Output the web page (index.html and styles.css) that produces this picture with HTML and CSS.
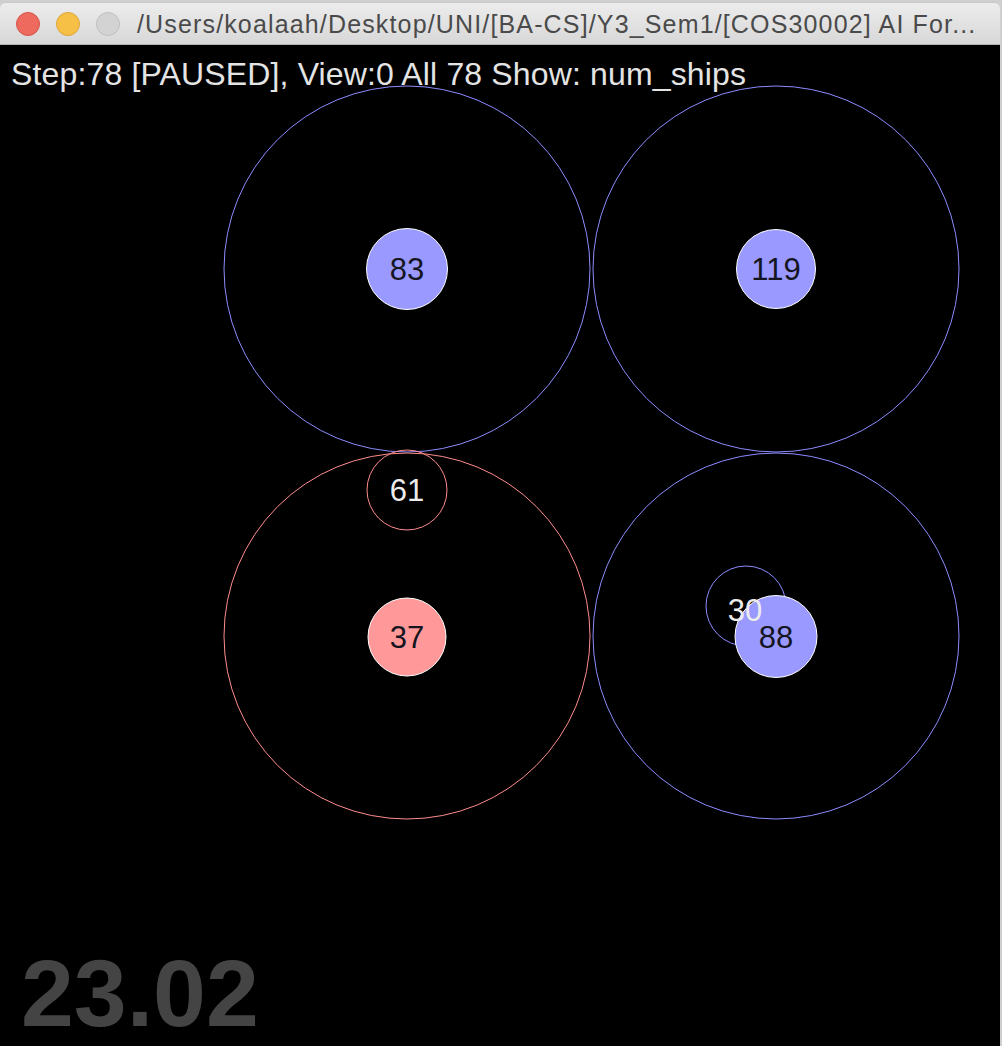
FILE: index.html
```html
<!DOCTYPE html>
<html>
<head>
<meta charset="utf-8">
<link rel="stylesheet" href="styles.css">
</head>
<body>
<div class="window">
  <div class="titlebar">
    <div class="lights">
      <span class="light red"></span>
      <span class="light yellow"></span>
      <span class="light grey"></span>
    </div>
    <div class="title">/Users/koalaah/Desktop/UNI/[BA-CS]/Y3_Sem1/[COS30002] AI For...</div>
  </div>
  <div class="canvas">
    <svg class="scene" width="1000" height="1000" viewBox="0 0 1000 1000" xmlns="http://www.w3.org/2000/svg">
      <rect x="0" y="0" width="1000" height="1000" fill="#000"/>
      <text class="status" x="11" y="40">Step:78 [PAUSED], View:0 All 78 Show: num_ships</text>
      <g fill="none" stroke-width="1">
        <circle cx="407" cy="224" r="183" stroke="#8c8cff"/>
        <circle cx="776" cy="224" r="183" stroke="#8c8cff"/>
        <circle cx="407" cy="591" r="183" stroke="#ff8c8c"/>
        <circle cx="776" cy="591" r="183" stroke="#8c8cff"/>
      </g>
      <circle cx="407" cy="224" r="40.5" fill="#9999ff" stroke="#fff" stroke-width="1"/>
      <text class="lbl dark" x="407" y="235">83</text>
      <circle cx="776" cy="224" r="39.5" fill="#9999ff" stroke="#fff" stroke-width="1"/>
      <text class="lbl dark" x="776" y="235">119</text>
      <circle cx="407" cy="445" r="40" fill="none" stroke="#ff8c8c" stroke-width="1"/>
      <text class="lbl light" x="407" y="456">61</text>
      <circle cx="407" cy="592" r="39" fill="#ff9999" stroke="#fff" stroke-width="1"/>
      <text class="lbl dark" x="407" y="603">37</text>
      <circle cx="746" cy="561" r="40" fill="none" stroke="#8c8cff" stroke-width="1"/>
      <circle cx="776" cy="591.5" r="41" fill="#9999ff" stroke="#fff" stroke-width="1"/>
      <text class="lbl light" x="745" y="576">30</text>
      <text class="lbl dark" x="776" y="603">88</text>
      <text class="clock" x="21" y="981">23.02</text>
    </svg>
  </div>
</div>
</body>
</html>
```
FILE: styles.css
```css
html, body {
  margin: 0;
  padding: 0;
}
body {
  background: #cfcfcf;
  width: 1002px;
  height: 1046px;
  overflow: hidden;
}
.window {
  width: 1000px;
  margin-top: 2px;
  display: flex;
  flex-direction: column;
}
.titlebar {
  height: 43px;
  box-sizing: border-box;
  border-top: 1px solid #c8c8c8;
  border-radius: 6px 6px 0 0;
  background: linear-gradient(#ececec, #d8d8d8);
  border-bottom: 1px solid #b4b4b4;
  display: flex;
  align-items: center;
  padding-left: 16px;
  gap: 17px;
  overflow: hidden;
}
.lights {
  display: flex;
  gap: 16px;
}
.light {
  width: 24px;
  height: 24px;
  border-radius: 50%;
  box-sizing: border-box;
}
.red {
  background: #ee6a5f;
  border: 1px solid #d5544b;
}
.yellow {
  background: #f6c046;
  border: 1px solid #dca53a;
}
.grey {
  background: #d3d3d3;
  border: 1px solid #c0c0c0;
}
.title {
  font-family: "Liberation Sans", Arial, sans-serif;
  font-size: 25px;
  letter-spacing: 1.15px;
  color: #4a4a4a;
  white-space: nowrap;
  padding-top: 1px;
}
.canvas {
  width: 1000px;
  height: 1001px;
  background: #000;
}
.scene {
  display: block;
}
.status {
  font-family: "Liberation Sans", Arial, sans-serif;
  font-size: 32px;
  letter-spacing: 0.15px;
  fill: #e4e4e4;
}
.lbl {
  font-family: "Liberation Sans", Arial, sans-serif;
  font-size: 31px;
  text-anchor: middle;
}
.dark {
  fill: #15151f;
}
text.light {
  fill: #ececec;
}
.clock {
  font-family: "Liberation Sans", Arial, sans-serif;
  font-size: 95px;
  font-weight: bold;
  fill: #444444;
}
```
